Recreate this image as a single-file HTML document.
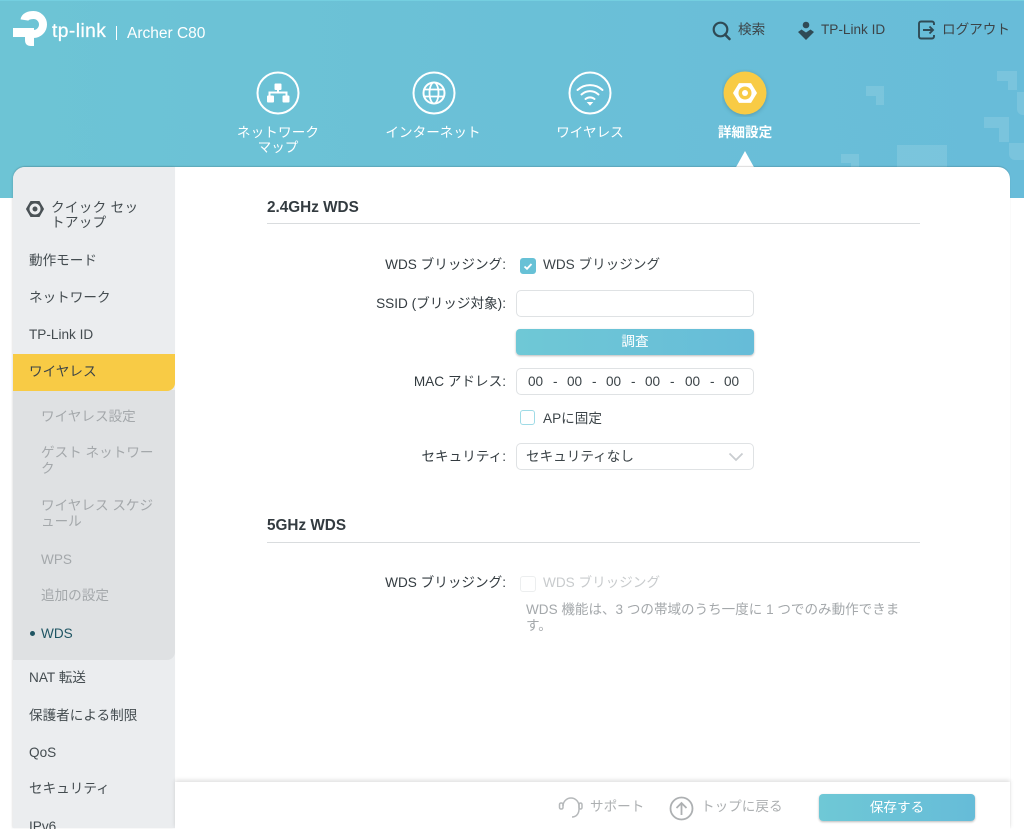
<!DOCTYPE html>
<html lang="ja"><head><meta charset="utf-8"><title>Archer C80</title>
<style>
html,body{margin:0;padding:0;width:1024px;height:829px;overflow:hidden;background:#fff}
body{position:relative;font-family:"Liberation Sans","Noto Sans CJK JP",sans-serif;font-size:13.6px;color:#3c4448}
.t{position:absolute;white-space:nowrap;line-height:16px;margin-top:1px}
.c{text-align:center;transform:translateX(-50%)}
.r{text-align:right;transform:translateX(-100%);color:#333b40}
.abs{position:absolute}
.m{left:29px;color:#444c50}
.s{left:41px;color:#a4a8ab}
.w{color:#fff}
.inp{position:absolute;left:516px;width:236px;height:25px;border:1px solid #dfe2e4;border-radius:5px;background:#fff}
.btn{position:absolute;background:linear-gradient(90deg,#6fc8d6,#66bcd8);border-radius:4px;color:#fff;text-align:center;box-shadow:0 1px 2px rgba(0,0,0,.28)}
.cb{position:absolute;left:520px;width:14px;height:14px;border-radius:3px}
h2{position:absolute;left:267px;margin:0;font-size:15.300px;line-height:18px;font-weight:bold;color:#333b40;white-space:nowrap}
.hr{position:absolute;left:267px;width:653px;height:1px;background:#d9dcde}
</style></head><body>
<div class="abs" style="left:0;top:0;width:1024px;height:198px;background:linear-gradient(90deg,#6dc4d5,#68bcd9);border-top:1px solid #74cfe0;box-sizing:border-box"></div>
<svg class="abs" style="left:0;top:0" width="1024" height="198" fill="#fff" fill-opacity=".12">
<path d="M997 71h20v19h-9v-9h-11z"/>
<path d="M1017 92h7v23h-1a6 6 0 0 1-6-6z"/>
<path d="M866 86h18v19h-8v-9h-10z"/>
<path d="M984 117h25v25h-10v-14h-15z"/>
<path d="M1009 143h15v17h-9a6 6 0 0 1-6-6z"/>
<path d="M897 145h50v22h-50z"/>
<path d="M841 154h18v13h-8v-4h-10z"/>
</svg>

<!-- logo -->
<svg class="abs" style="left:0;top:0" width="60" height="50" fill="none">
<path d="M24.500 20C25 16.500 29 15 33.500 15A9.500 9.500 0 0 1 33.500 34" stroke="#fff" stroke-width="8"/>
<path d="M13 28h21v18h-3c-4 0-6-2-6-6v-3H13z" fill="#fff"/>
</svg>
<div class="t w" style="left:52px;top:19px;font-size:19.200px;line-height:24px;letter-spacing:.45px;-webkit-text-stroke:.25px #fff">tp-link</div>
<div class="abs" style="left:116px;top:26px;width:1px;height:14px;background:#fff"></div>
<div class="t w" style="left:127px;top:24px;font-size:15.500px;line-height:18px">Archer C80</div>

<!-- top right -->
<svg class="abs" style="left:712px;top:21px" width="20" height="20" fill="none" stroke="#2f4a55" stroke-width="2.200"><circle cx="8.500" cy="8.500" r="6.800"/><path d="M13 13.500l4.500 4.500" stroke-width="2.600" stroke-linecap="round"/></svg>
<div class="t" style="left:738px;top:21px">検索</div>
<svg class="abs" style="left:797px;top:21px" width="18" height="20" fill="#2f4a55"><circle cx="9" cy="4" r="3.300"/><path d="M1 11l3.500-2.500L9 11.500l4.500-3L17 11l-8 8z"/></svg>
<div class="t" style="left:821px;top:21px">TP-Link ID</div>
<svg class="abs" style="left:918px;top:20px" width="18" height="20" fill="none" stroke="#2f4a55" stroke-width="1.900"><path d="M16 5V3.500A2 2 0 0 0 14 1.500H3A2 2 0 0 0 1 3.500v13a2 2 0 0 0 2 2h11a2 2 0 0 0 2-2V15"/><path d="M5 10h10M11.500 6.500L15 10l-3.500 3.500"/></svg>
<div class="t" style="left:942px;top:21px">ログアウト</div>

<!-- nav -->
<svg class="abs" style="left:256px;top:70.500px" width="44" height="44" fill="#fff"><circle cx="22" cy="22" r="20.500" fill="none" stroke="#fff" stroke-width="2"/><rect x="18.500" y="12.500" width="7" height="6.500" rx="1"/><rect x="11" y="24.500" width="7" height="7" rx="1"/><rect x="26.500" y="24.500" width="7" height="7" rx="1"/><path d="M21 18h2v2.500h8.500V25h-2v-2.500h-15V25h-2v-4.500H21z"/></svg>
<div class="t w c" style="left:278px;top:124px;letter-spacing:.1px">ネットワーク</div>
<div class="t w c" style="left:278px;top:139px">マップ</div>
<svg class="abs" style="left:412px;top:70.500px" width="44" height="44" fill="none" stroke="#fff"><circle cx="22" cy="22" r="20.500" stroke-width="2"/><circle cx="22" cy="22" r="10.500" stroke-width="2"/><ellipse cx="22" cy="22" rx="4.500" ry="10.500" stroke-width="1.800"/><path d="M12 18.500h20M12 25.500h20" stroke-width="1.800"/></svg>
<div class="t w c" style="left:433px;top:124px">インターネット</div>
<svg class="abs" style="left:568px;top:70.500px" width="44" height="44" fill="none" stroke="#fff"><circle cx="22" cy="22" r="20.500" stroke-width="2"/><path d="M9.500 19c7-6.500 18-6.500 25 0M13.500 23.500c5-4.500 12-4.500 17 0M17.500 28c2.500-2.200 6.500-2.200 9 0" stroke-width="2" stroke-linecap="round"/><path d="M19.800 31.500h4.400L22 34z" fill="#fff"/></svg>
<div class="t w c" style="left:590px;top:124px">ワイヤレス</div>
<svg class="abs" style="left:722px;top:69px" width="48" height="48"><circle cx="23" cy="24" r="21.500" fill="#f8cb45" style="filter:drop-shadow(0 1px 2px rgba(0,0,0,.2))"/><path d="M17.500 15h11l5.500 9-5.500 9h-11L12 24z" fill="#fff" stroke="#fff" stroke-width="1.800" stroke-linejoin="round"/><circle cx="23" cy="24" r="6.500" fill="#f8cb45"/><circle cx="23" cy="24" r="3" fill="#fff"/></svg>
<div class="t w c" style="left:745px;top:124px;font-weight:bold">詳細設定</div>
<svg class="abs" style="left:735px;top:151px" width="20" height="18"><path d="M10 0L20 18H0z" fill="#fff"/></svg>

<!-- panel -->
<div class="abs" style="left:13px;top:167px;width:997px;height:662px;background:#fff;border-radius:12px 12px 0 0;box-shadow:0 -1px 1px rgba(0,0,0,.14)"></div>
<div class="abs" style="left:13px;top:167px;width:162px;height:661px;background:#ebedef;border-radius:12px 0 0 0;box-shadow:-1px 0 2px rgba(0,0,0,.08)"></div>
<div class="abs" style="left:13px;top:390px;width:162px;height:270px;background:#dfe1e3;border-radius:0 0 8px 0"></div>
<div class="abs" style="left:13px;top:354px;width:162px;height:37px;background:#f8cb45;border-radius:0 0 8px 0"></div>
<svg class="abs" style="left:25px;top:199px" width="20" height="20"><path d="M5.800 2.500h8.400l4.300 7.500-4.300 7.500H5.800L1.500 10z" fill="#4a5256" stroke="#4a5256" stroke-linejoin="round"/><circle cx="10" cy="10" r="5.500" fill="#ebedef"/><circle cx="10" cy="10" r="2.500" fill="#4a5256"/></svg>
<div class="t m" style="left:51px;top:199px;letter-spacing:.3px">クイック セッ</div>
<div class="t m" style="left:51px;top:214px;letter-spacing:.3px">トアップ</div>
<div class="t m" style="top:252px">動作モード</div>
<div class="t m" style="top:289px">ネットワーク</div>
<div class="t m" style="top:326px">TP-Link ID</div>
<div class="t m" style="top:363px;color:#3c4448">ワイヤレス</div>
<div class="t s" style="top:408px">ワイヤレス設定</div>
<div class="t s" style="top:444px">ゲスト ネットワー</div>
<div class="t s" style="top:460px">ク</div>
<div class="t s" style="top:497px">ワイヤレス スケジ</div>
<div class="t s" style="top:513px">ュール</div>
<div class="t s" style="top:551px">WPS</div>
<div class="t s" style="top:587px">追加の設定</div>
<div class="abs" style="left:30px;top:631px;width:5px;height:5px;border-radius:50%;background:#1f5563"></div>
<div class="t s" style="top:625px;color:#1f5563">WDS</div>
<div class="t m" style="top:669px">NAT 転送</div>
<div class="t m" style="top:707px">保護者による制限</div>
<div class="t m" style="top:744px">QoS</div>
<div class="t m" style="top:780px">セキュリティ</div>
<div class="t m" style="top:818px">IPv6</div>

<!-- content -->
<h2 style="top:199px">2.4GHz WDS</h2><div class="hr" style="top:223px"></div>
<div class="t r" style="left:506px;top:256px">WDS ブリッジング:</div>
<div class="cb" style="top:258px;background:#67c1d6;border:1px solid #67c1d6"><svg width="14" height="14" style="display:block"><path d="M3.500 7.500l2.500 2.300 4.500-4.800" fill="none" stroke="#fff" stroke-width="1.800"/></svg></div>
<div class="t" style="left:543px;top:256px">WDS ブリッジング</div>
<div class="t r" style="left:506px;top:295px">SSID (ブリッジ対象):</div>
<div class="inp" style="top:290px"></div>
<div class="btn" style="left:516px;top:329px;width:238px;height:26px;line-height:25px">調査</div>
<div class="t r" style="left:506px;top:373px">MAC アドレス:</div>
<div class="inp" style="top:368px"></div>
<div class="t" style="left:528px;top:373px">00</div><div class="t" style="left:553px;top:373px">-</div>
<div class="t" style="left:567px;top:373px">00</div><div class="t" style="left:592px;top:373px">-</div>
<div class="t" style="left:606px;top:373px">00</div><div class="t" style="left:631px;top:373px">-</div>
<div class="t" style="left:645px;top:373px">00</div><div class="t" style="left:670px;top:373px">-</div>
<div class="t" style="left:685px;top:373px">00</div><div class="t" style="left:710px;top:373px">-</div>
<div class="t" style="left:724px;top:373px">00</div>
<div class="cb" style="top:410px;border:1.500px solid #9fdbe6;box-sizing:content-box;width:13px;height:13px"></div>
<div class="t" style="left:543px;top:410px">APに固定</div>
<div class="t r" style="left:506px;top:448px">セキュリティ:</div>
<div class="inp" style="top:443px"></div>
<div class="t" style="left:526px;top:448px">セキュリティなし</div>
<svg class="abs" style="left:728px;top:451px" width="16" height="12"><path d="M1.500 2.500L8 9l6.500-6.500" fill="none" stroke="#c9cdd0" stroke-width="1.800"/></svg>

<h2 style="top:517px">5GHz WDS</h2><div class="hr" style="top:542px"></div>
<div class="t r" style="left:506px;top:574px">WDS ブリッジング:</div>
<div class="cb" style="top:576px;border:1px solid #eceeef"></div>
<div class="t" style="left:543px;top:574px;color:#c8cbcd">WDS ブリッジング</div>
<div class="t" style="left:526px;top:601px;color:#a4a8ab;font-size:13.550px">WDS 機能は、3 つの帯域のうち一度に 1 つでのみ動作できま</div>
<div class="t" style="left:526px;top:617px;color:#a4a8ab">す。</div>

<!-- footer -->
<div class="abs" style="left:175px;top:782px;width:835px;height:47px;background:#fff;box-shadow:0 -2px 4px rgba(0,0,0,.12)"></div>
<svg class="abs" style="left:558px;top:795px" width="26" height="26" fill="none" stroke="#b5b8ba" stroke-width="1.500"><path d="M5 11a8 8 0 0 1 16 0v3c0 5-3 8-7 8"/><rect x="1.500" y="8" width="3.500" height="6" rx="1.500"/><rect x="21" y="8" width="3" height="6" rx="1.500"/></svg>
<div class="t" style="left:590px;top:798px;color:#adb0b2">サポート</div>
<svg class="abs" style="left:669px;top:796px" width="25" height="25" fill="none" stroke="#adb0b2" stroke-width="1.800"><circle cx="12.500" cy="12.500" r="11"/><path d="M12.500 19V7M7.500 12l5-5 5 5"/></svg>
<div class="t" style="left:701px;top:798px;color:#adb0b2">トップに戻る</div>
<div class="btn" style="left:819px;top:794px;width:156px;height:27px;line-height:27px">保存する</div>
</body></html>
